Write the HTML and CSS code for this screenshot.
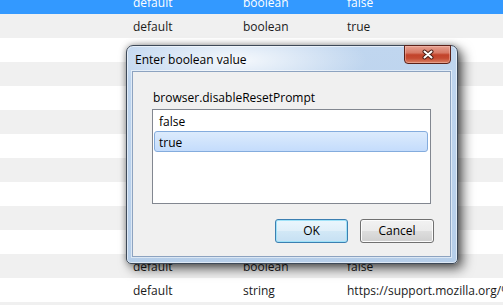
FILE: index.html
```html
<!DOCTYPE html>
<html>
<head>
<meta charset="utf-8">
<link rel="stylesheet" href="styles.css">
</head>
<body>
<div class="table">
  <div class="row sel"><span></span><span>default</span><span>boolean</span><span>false</span></div>
  <div class="row alt"><span></span><span>default</span><span>boolean</span><span>true</span></div>
  <div class="row"></div>
  <div class="row alt"></div>
  <div class="row"></div>
  <div class="row alt"></div>
  <div class="row"></div>
  <div class="row alt"></div>
  <div class="row"></div>
  <div class="row alt"></div>
  <div class="row"></div>
  <div class="row alt"><span></span><span>default</span><span>boolean</span><span>false</span></div>
  <div class="row"><span></span><span>default</span><span>string</span><span class="clip">https://support.mozilla.org/%LOCALE%</span></div>
  <div class="row alt"></div>
</div>

<div class="dialog">
  <div class="titlebar">
    <span class="title">Enter boolean value</span>
    <div class="close">
      <svg width="14" height="11" viewBox="0 0 14 11">
        <path d="M3.5 2.5 L10.5 8.5 M10.5 2.5 L3.5 8.5" stroke="#4a1c14" stroke-width="4" stroke-linecap="round"/>
        <path d="M3.5 2.5 L10.5 8.5 M10.5 2.5 L3.5 8.5" stroke="#ffffff" stroke-width="2" stroke-linecap="round"/>
      </svg>
    </div>
  </div>
  <div class="client">
    <div class="label">browser.disableResetPrompt</div>
    <div class="listbox">
      <div class="item">false</div>
      <div class="item selected">true</div>
    </div>
    <div class="buttons">
      <div class="btn default">OK</div>
      <div class="btn">Cancel</div>
    </div>
  </div>
</div>
</body>
</html>
```

FILE: styles.css
```css
html, body {
  margin: 0;
  padding: 0;
}
body {
  width: 503px;
  height: 305px;
  overflow: hidden;
  position: relative;
  background: #ffffff;
  font-family: "Segoe UI", "Open Sans", "Noto Sans", sans-serif;
  font-size: 12px;
  color: #000;
}

.table {
  margin-top: -10px;
}
.row {
  display: grid;
  grid-template-columns: 133px 110px 104px 156px;
  height: 24px;
  line-height: 25px;
  white-space: nowrap;
  color: #1a1a1a;
}
.row.alt {
  background: #f0f0f0;
}
.row.sel {
  background: #3399ff;
  color: #ffffff;
}
.clip {
  overflow: hidden;
}

.dialog {
  position: absolute;
  left: 126px;
  top: 45px;
  width: 332px;
  height: 219px;
  box-sizing: border-box;
  border: 1px solid #3d4958;
  border-radius: 7px 7px 5px 5px;
  display: flex;
  flex-direction: column;
  background:
    radial-gradient(ellipse 130px 34px at 110px 14px, rgba(255,255,255,0.85), rgba(255,255,255,0) 100%),
    linear-gradient(to bottom, #c0d6ef 0%, #bdd4ee 30%, #b6cee9 100%);
  box-shadow:
    inset 0 0 0 1px rgba(255,255,255,0.55),
    5px 5px 12px rgba(0,0,0,0.6),
    0 0 6px rgba(0,0,0,0.35);
}

.titlebar {
  height: 25px;
  display: flex;
  align-items: center;
  padding-left: 8px;
}
.title {
  line-height: 16px;
  padding-top: 3px;
  color: #000;
}
.close {
  margin-left: auto;
  margin-right: 6px;
  margin-top: -1px;
  align-self: flex-start;
  width: 47px;
  height: 19px;
  box-sizing: border-box;
  border: 1px solid #5a2119;
  border-radius: 0 0 4px 4px;
  background: linear-gradient(to bottom, #e6a090 0%, #d77a66 40%, #c2432b 52%, #c54b32 72%, #da8368 100%);
  box-shadow: inset 0 0 0 1px rgba(255,205,195,0.4);
  display: flex;
  align-items: center;
  justify-content: center;
}
.close svg {
  display: block;
}

.client {
  flex: 1;
  margin: 0 6px 6px 5px;
  border: 1px solid #8da3c0;
  box-shadow: 0 0 0 1px rgba(255,255,255,0.5);
  background: #f0f0f0;
  padding: 18px 19px 13px 19px;
  display: flex;
  flex-direction: column;
}
.label {
  line-height: 16px;
  padding-left: 1px;
  color: #000;
}
.listbox {
  margin-top: 3px;
  width: 279px;
  height: 95px;
  box-sizing: border-box;
  border: 1px solid #828790;
  background: #ffffff;
  padding: 0 2px 0 1px;
}
.item {
  height: 21px;
  line-height: 21px;
  box-sizing: border-box;
  border: 1px solid transparent;
  padding-left: 4px;
  color: #000;
}
.item.selected {
  border-color: #84acdd;
  border-radius: 3px;
  background: linear-gradient(to bottom, #dcebfc, #c4dcfc);
}

.buttons {
  margin-top: 15px;
  margin-right: -3px;
  display: flex;
  justify-content: flex-end;
  gap: 12px;
}
.btn {
  width: 73px;
  height: 24px;
  box-sizing: border-box;
  border: 1px solid #707070;
  border-radius: 3px;
  background: linear-gradient(to bottom, #f2f2f2 0%, #ebebeb 48%, #dddddd 52%, #cfcfcf 100%);
  box-shadow: inset 0 0 0 1px #fcfcfc;
  text-align: center;
  line-height: 21px;
  color: #000;
}
.btn + .btn {
  width: 74px;
}
.btn.default {
  border-color: #3c7fb1;
  box-shadow: inset 0 0 0 1px #9fe2f8;
  background: linear-gradient(to bottom, #eaf6fd 0%, #e0eff9 48%, #d2e8f6 52%, #c6e0f3 100%);
}
```
